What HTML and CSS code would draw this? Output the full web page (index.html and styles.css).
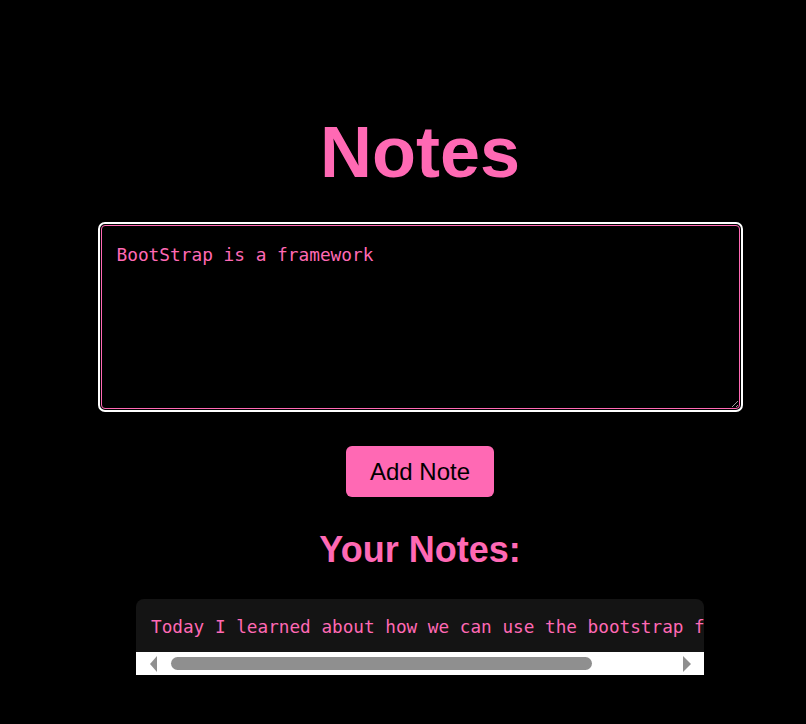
FILE: index.html
```html
<!DOCTYPE html>
<html lang="en">
<head>
<meta charset="utf-8">
<title>Notes</title>
<link rel="stylesheet" href="styles.css">
</head>
<body>
<main class="app">
  <h1 class="title">Notes</h1>
  <textarea class="note-input" spellcheck="true">BootStrap is a framework</textarea>
  <button class="add-btn" type="button">Add Note</button>
  <h2 class="subtitle">Your Notes:</h2>
  <div class="note-card">
    <div class="note-text">Today I learned about how we can use the bootstrap framework.</div>
    <div class="scrollbar" aria-hidden="true">
      <span class="sb-arrow"><svg width="7" height="16" viewBox="0 0 7 16"><polygon points="7,0 7,16 0,8" fill="#8f8f8f"/></svg></span>
      <span class="sb-track"><span class="sb-thumb"></span></span>
      <span class="sb-arrow"><svg width="8" height="16" viewBox="0 0 8 16"><polygon points="0,0 0,16 8,8" fill="#8f8f8f"/></svg></span>
    </div>
  </div>
</main>
</body>
</html>
```

FILE: styles.css
```css
html, body {
  margin: 0;
  padding: 0;
  background: #000;
}

body {
  font-family: "Liberation Sans", Arial, sans-serif;
  color: #ff69b4;
}

.app {
  margin-left: 34px;
  display: flex;
  flex-direction: column;
  align-items: center;
}

.title {
  margin: 111px 0 0;
  font-size: 72px;
  line-height: 83px;
  font-weight: bold;
  color: #ff69b4;
}

.note-input {
  box-sizing: border-box;
  margin-top: 31px;
  width: 639px;
  height: 184px;
  padding: 18px 15px 14px;
  background: #000;
  color: #ff69b4;
  border: 1px solid #ff69b4;
  border-radius: 4px;
  outline: 2px solid #fff;
  outline-offset: 1px;
  font-family: "DejaVu Sans Mono", monospace;
  font-size: 17.8px;
  resize: both;
}

.add-btn {
  margin-top: 37px;
  width: 148px;
  height: 51px;
  background: #ff69b4;
  color: #000;
  border: none;
  border-radius: 6px;
  font-family: "Liberation Sans", Arial, sans-serif;
  font-size: 24px;
  padding: 0;
  cursor: pointer;
}

.subtitle {
  margin: 32px 0 0;
  font-size: 36px;
  line-height: 41px;
  font-weight: bold;
  color: #ff69b4;
}

.note-card {
  margin-top: 29px;
  width: 568px;
  background: #141414;
  border-radius: 8px 8px 0 0;
  overflow: hidden;
}

.note-text {
  padding: 16px 15px 13px;
  white-space: nowrap;
  overflow: hidden;
  font-family: "DejaVu Sans Mono", monospace;
  font-size: 17.7px;
  line-height: 24px;
  color: #ff69b4;
}

.scrollbar {
  display: flex;
  align-items: center;
  height: 23px;
  background: #fff;
}

.sb-arrow {
  width: 34px;
  display: flex;
  justify-content: center;
  align-items: center;
}

.sb-track {
  flex: 1;
  display: flex;
  align-items: center;
  padding-left: 1px;
}

.sb-thumb {
  width: 421px;
  height: 13px;
  border-radius: 7px;
  background: #8f8f8f;
}
```
